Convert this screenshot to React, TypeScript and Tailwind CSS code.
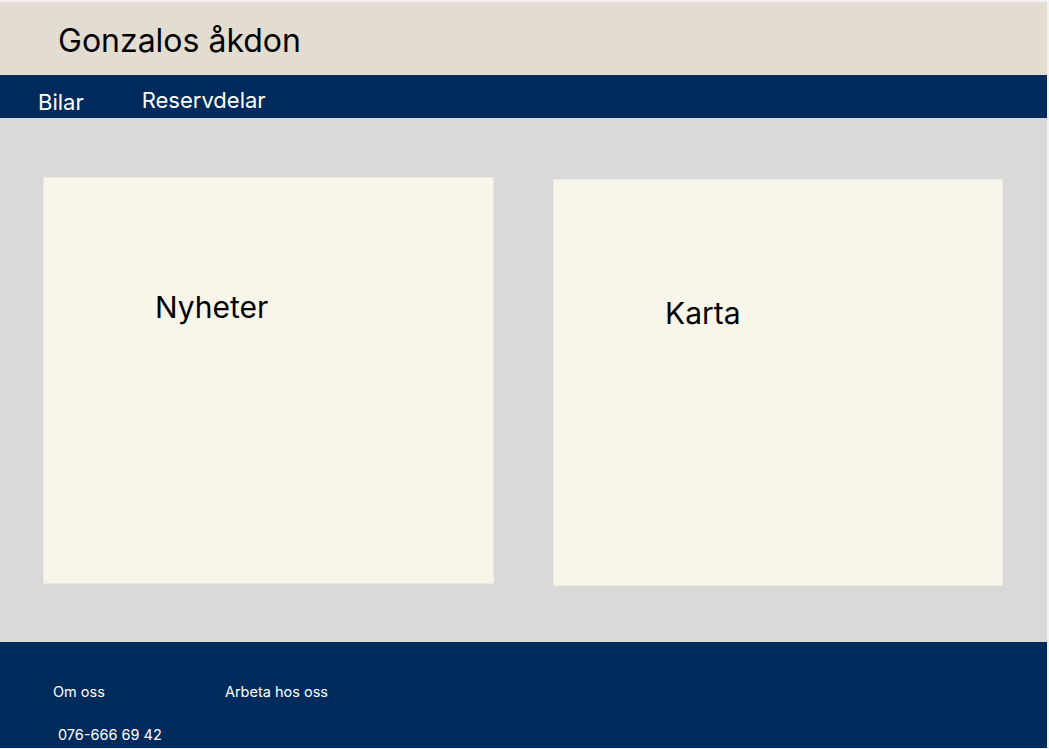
import React from "react";

export default function App() {
  const font = { fontFamily: "Inter, 'Noto Sans', sans-serif" };
  return (
    <div className="w-[1049px] h-[749px] bg-[#f3f2f0] pt-[2px] overflow-hidden" style={font}>
      <div className="w-[1047px] flex flex-col">
        <header className="h-[73px] bg-[#e3dcd1] pl-[58px] pt-[23px]">
          <h1 className="text-[32px] leading-none text-black font-normal">Gonzalos åkdon</h1>
        </header>
        <nav className="h-[43px] bg-[#002b5c] flex items-start text-white text-[22px] leading-none">
          <a className="ml-[38px] mt-[16px]">Bilar</a>
          <a className="ml-[58px] mt-[14px]">Reservdelar</a>
        </nav>
        <main className="h-[524px] bg-[#d9d9d9] flex items-start pl-[43px] gap-[59px]">
          <section className="mt-[59px] w-[451px] h-[407px] bg-[#f8f5eb] border border-[#ece9e1] pl-[111px] pt-[114px]">
            <h2 className="text-[30px] leading-none text-black">Nyheter</h2>
          </section>
          <section className="mt-[61px] w-[450px] h-[407px] bg-[#f8f5eb] border border-[#ece9e1] pl-[111px] pt-[118px]">
            <h2 className="text-[30px] leading-none text-black">Karta</h2>
          </section>
        </main>
        <footer className="h-[106px] bg-[#002b5c] text-white text-[14.5px] leading-none flex flex-col pt-[43px]">
          <div className="flex">
            <span className="ml-[53px]">Om oss</span>
            <span className="ml-[120px]">Arbeta hos oss</span>
          </div>
          <div className="ml-[58px] mt-[28px]">076-666 69 42</div>
        </footer>
      </div>
    </div>
  );
}
